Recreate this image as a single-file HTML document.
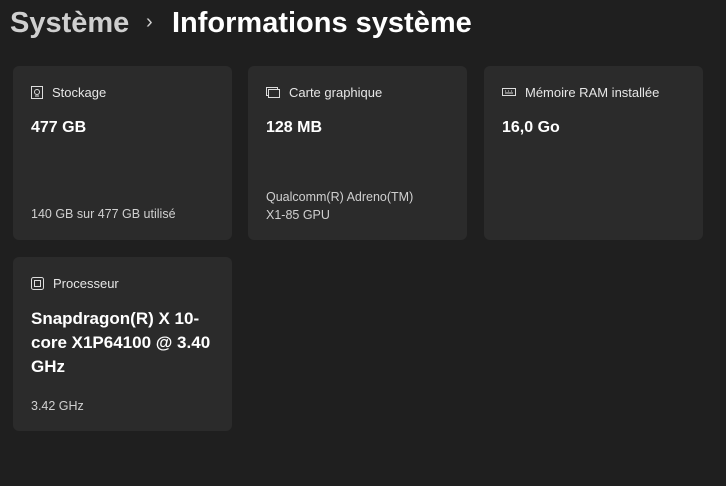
<!DOCTYPE html>
<html><head><meta charset="utf-8"><style>
body{margin:0;width:726px;height:486px;background:#1f1f1f;font-family:"Liberation Sans",sans-serif;color:#fff;position:relative;overflow:hidden}
.t{position:absolute;top:7px;font-size:29px;white-space:nowrap;font-weight:bold}
.card{position:absolute;background:#2b2b2b;border-radius:6px;width:219px}
.lab{position:absolute;left:18px;top:19px;font-size:13px;color:#e6e6e6;display:flex;align-items:center}
.lab svg{margin-right:9px}
.val{position:absolute;left:18px;top:53px;font-size:16px;font-weight:bold}
.sub{position:absolute;left:18px;font-size:12.5px;color:#d0d0d0;line-height:18px}
</style></head><body>
<div class="t" style="left:10px;color:#cfcfcf">Système</div>
<div class="t" style="left:146px;top:11px;font-size:20px;color:#cfcfcf;font-weight:normal">›</div>
<div class="t" style="left:172px">Informations système</div>

<div class="card" style="left:13px;top:66px;height:174px">
<div class="lab"><svg width="12" height="13" viewBox="0 0 12 13"><rect x="0.5" y="0.5" width="11" height="12" fill="none" stroke="#ddd"/><circle cx="6" cy="6" r="2.5" fill="none" stroke="#ddd"/><line x1="4" y1="10" x2="8" y2="10" stroke="#ddd"/></svg>Stockage</div>
<div class="val">477 GB</div>
<div class="sub" style="top:139px">140 GB sur 477 GB utilisé</div>
</div>

<div class="card" style="left:248px;top:66px;height:174px">
<div class="lab"><svg width="14" height="11" viewBox="0 0 14 11"><rect x="0.5" y="0.5" width="11" height="8" fill="none" stroke="#ddd"/><rect x="2.5" y="2.5" width="11" height="8" fill="#2b2b2b" stroke="#ddd"/></svg>Carte graphique</div>
<div class="val">128 MB</div>
<div class="sub" style="top:122px">Qualcomm(R) Adreno(TM)<br>X1-85 GPU</div>
</div>

<div class="card" style="left:484px;top:66px;height:174px">
<div class="lab"><svg width="14" height="10" viewBox="0 0 14 10"><rect x="0.5" y="0.5" width="13" height="7" fill="none" stroke="#ddd"/><path d="M3 3h1M6 3h1M9 3h1M3 5h8" stroke="#ddd"/></svg>Mémoire RAM installée</div>
<div class="val">16,0 Go</div>
</div>

<div class="card" style="left:13px;top:257px;height:174px">
<div class="lab"><svg width="13" height="13" viewBox="0 0 13 13"><rect x="0.5" y="0.5" width="12" height="12" rx="2" fill="none" stroke="#ddd"/><rect x="3.5" y="3.5" width="6" height="6" fill="none" stroke="#ddd"/></svg>Processeur</div>
<div class="val" style="font-size:17px;line-height:24px;top:50px">Snapdragon(R) X 10-<br>core X1P64100 @ 3.40<br>GHz</div>
<div class="sub" style="top:140px">3.42 GHz</div>
</div>
</body></html>
